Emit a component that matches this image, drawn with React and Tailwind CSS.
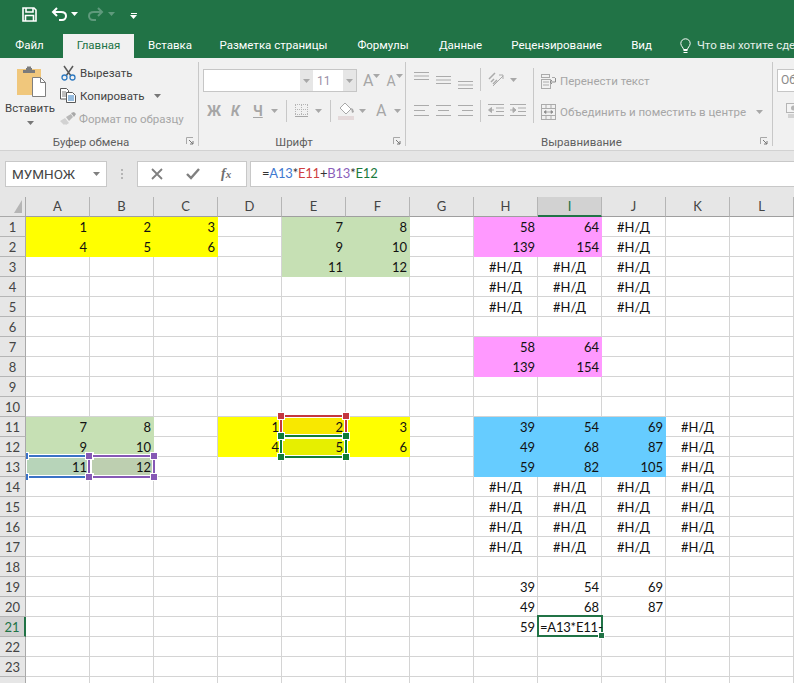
const COLS = ['A', 'B', 'C', 'D', 'E', 'F', 'G', 'H', 'I', 'J', 'K', 'L'];
const ROWS = Array.from({ length: 24 }, (_, i) => i + 1);
const NA = '#Н/Д';

const values = {
  A1: 1, B1: 2, C1: 3, E1: 7, F1: 8, H1: 58, I1: 64, J1: NA,
  A2: 4, B2: 5, C2: 6, E2: 9, F2: 10, H2: 139, I2: 154, J2: NA,
  E3: 11, F3: 12, H3: NA, I3: NA, J3: NA,
  H4: NA, I4: NA, J4: NA,
  H5: NA, I5: NA, J5: NA,
  H7: 58, I7: 64,
  H8: 139, I8: 154,
  A11: 7, B11: 8, D11: 1, E11: 2, F11: 3, H11: 39, I11: 54, J11: 69, K11: NA,
  A12: 9, B12: 10, D12: 4, E12: 5, F12: 6, H12: 49, I12: 68, J12: 87, K12: NA,
  A13: 11, B13: 12, H13: 59, I13: 82, J13: 105, K13: NA,
  H14: NA, I14: NA, J14: NA, K14: NA,
  H15: NA, I15: NA, J15: NA, K15: NA,
  H16: NA, I16: NA, J16: NA, K16: NA,
  H17: NA, I17: NA, J17: NA, K17: NA,
  H19: 39, I19: 54, J19: 69,
  H20: 49, I20: 68, J20: 87,
  H21: 59,
};

const YELLOW = 'bg-[#ffff00] border-[#ffff00]';
const GREEN = 'bg-[#c6e0b4] border-[#c6e0b4]';
const PINK = 'bg-[#ff99ff] border-[#ff99ff]';
const BLUE = 'bg-[#66ccff] border-[#66ccff]';

const inRange = (col, row, from, to, r1, r2) => col >= from && col <= to && row >= r1 && row <= r2;

const fillFor = (col, row) => {
  const id = col + row;
  if (id === 'A13') return 'bg-[#b7d4b9] border-[#b7d4b9]';
  if (id === 'B13') return 'bg-[#bdcfb0] border-[#bdcfb0]';
  if (id === 'E11') return 'bg-[#f8e800] border-[#f8e800]';
  if (id === 'E12') return 'bg-[#e6ef00] border-[#e6ef00]';
  if (inRange(col, row, 'A', 'C', 1, 2) || inRange(col, row, 'D', 'F', 11, 12)) return YELLOW;
  if (inRange(col, row, 'E', 'F', 1, 3) || inRange(col, row, 'A', 'B', 11, 13)) return GREEN;
  if (inRange(col, row, 'H', 'I', 1, 2) || inRange(col, row, 'H', 'I', 7, 8)) return PINK;
  if (inRange(col, row, 'H', 'J', 11, 13)) return BLUE;
  return 'border-[#d4d4d4]';
};

const REFS = {
  A13: { line: 'border-[#3a72c6]', dot: 'bg-[#3a72c6]' },
  B13: { line: 'border-[#8659b5]', dot: 'bg-[#8659b5]' },
  E11: { line: 'border-[#c4373f]', dot: 'bg-[#c4373f]' },
  E12: { line: 'border-[#0f7d36]', dot: 'bg-[#0f7d36]' },
};

function RefBox({ line, dot }) {
  const handle = `absolute w-[6px] h-[6px] outline outline-1 outline-white ${dot}`;
  return (
    <div className={`absolute z-10 left-[-2px] top-[-2px] w-[67px] h-[23px] border-2 shadow-[inset_0_0_0_1px_#ffffff,0_0_0_1px_#ffffff] ${line}`}>
      <div className={`${handle} left-[-4px] top-[-4px]`} />
      <div className={`${handle} right-[-4px] top-[-4px]`} />
      <div className={`${handle} left-[-4px] bottom-[-4px]`} />
      <div className={`${handle} right-[-4px] bottom-[-4px]`} />
    </div>
  );
}

function Caret({ className = '', color = '#a8a8a8' }) {
  return (
    <svg width="7" height="4" viewBox="0 0 7 4" className={`shrink-0 ${className}`}>
      <path d="M0 0h7L3.500 4z" fill={color} />
    </svg>
  );
}

function Launcher() {
  return (
    <svg width="8" height="8" viewBox="0 0 8 8" className="absolute right-[4px] top-[5px]">
      <path d="M.5 7V.5H7" fill="none" stroke="#a8a8a8" />
      <path d="M3 3l4 4M7 4v3H4" fill="none" stroke="#777777" />
    </svg>
  );
}

// horizontal rows for the alignment buttons
function Lines({ rows, width = 15, gap = 3.5 }) {
  const h = Math.ceil(rows.length * gap);
  return (
    <svg width={width} height={h} viewBox={`0 0 ${width} ${h}`} className="shrink-0">
      {rows.map(([x1, x2], i) => (
        <rect key={i} x={x1} y={i * gap} width={x2 - x1} height="1" fill="#ababab" />
      ))}
    </svg>
  );
}

function SaveIcon() {
  return (
    <svg width="15" height="15" viewBox="0 0 15 15">
      <path d="M1 1h11l2 2v11H1z" fill="none" stroke="#ffffff" strokeWidth="1.6" />
      <path d="M4 1v4h7V1M3.500 14V8.500h8V14" fill="none" stroke="#ffffff" strokeWidth="1.6" />
    </svg>
  );
}

function UndoIcon({ color }) {
  return (
    <svg width="16" height="14" viewBox="0 0 16 14">
      <path d="M6 1L2 5l4 4" fill="none" stroke={color} strokeWidth="2" />
      <path d="M2.500 5H10c3.500 0 5 2 5 4s-1.500 4-4 4H8" fill="none" stroke={color} strokeWidth="2" />
    </svg>
  );
}

function RedoIcon({ color }) {
  return (
    <svg width="16" height="14" viewBox="0 0 16 14">
      <path d="M10 1l4 4-4 4" fill="none" stroke={color} strokeWidth="2" />
      <path d="M13.500 5H6C2.500 5 1 7 1 9s1.500 4 4 4h3" fill="none" stroke={color} strokeWidth="2" />
    </svg>
  );
}

function PasteIcon() {
  return (
    <svg width="30" height="32" viewBox="0 0 30 32">
      <rect x="0" y="4" width="24" height="26" fill="#f0c77c" />
      <path d="M6 5h12v3H6z" fill="#7b7b7b" />
      <path d="M9 3h6v2H9z" fill="#7b7b7b" />
      <path d="M10 1.500h4V3h-4z" fill="#7b7b7b" />
      <path d="M15.500 12.500h8l5 5v14h-13z" fill="#ffffff" stroke="#7f7f7f" />
      <path d="M23.500 12.500v5h5" fill="none" stroke="#7f7f7f" />
    </svg>
  );
}

function ScissorsIcon() {
  return (
    <svg width="15" height="16" viewBox="0 0 15 16">
      <path d="M3 1l7 10M12 1L5 11" stroke="#595959" strokeWidth="1.5" fill="none" />
      <circle cx="3.500" cy="12.500" r="2.500" fill="none" stroke="#2f7ac0" strokeWidth="1.300" />
      <circle cx="11.500" cy="12.500" r="2.500" fill="none" stroke="#2f7ac0" strokeWidth="1.300" />
    </svg>
  );
}

function CopyIcon() {
  return (
    <svg width="16" height="15" viewBox="0 0 16 15">
      <path d="M.5.500h6l2 2V11H.5z" fill="#ffffff" stroke="#595959" />
      <path d="M2 4h4M2 6h4M2 8h4" stroke="#7f7f7f" />
      <path d="M6.500 4.500h6l3 3v7h-9z" fill="#ffffff" stroke="#595959" />
      <path d="M8 8h6M8 10h6M8 12h6" stroke="#2f7ac0" />
    </svg>
  );
}

function BrushIcon() {
  return (
    <svg width="16" height="14" viewBox="0 0 16 14">
      <path d="M0 9l5-3 4 5-3 2-1-1-1 1z" fill="#d2d2d2" />
      <path d="M6 5l5-3 2 3-4 4z" fill="#b8b8b8" />
      <path d="M11 1l3-1 2 2-2 3z" fill="#a8a8a8" />
    </svg>
  );
}

function BordersIcon() {
  return (
    <svg width="13" height="15" viewBox="0 0 13 15">
      <path d="M.5 1v10M6.500 1v10M12.500 1v10M0 .5h13M0 5.500h13M0 10.500h13" stroke="#b5b5b5" strokeDasharray="1 1" fill="none" />
      <rect x="0" y="12" width="13" height="1" fill="#a8a8a8" />
    </svg>
  );
}

function FillIcon() {
  return (
    <svg width="17" height="18" viewBox="0 0 17 18">
      <path d="M7 1l6 6-5 5-6-6z" fill="#ffffff" stroke="#a8a8a8" />
      <path d="M13 6l2 1 1 3-2 1z" fill="#a8a8a8" />
      <rect x="0" y="14" width="16" height="4" fill="#e4d9da" />
    </svg>
  );
}

function OrientIcon() {
  return (
    <svg width="16" height="16" viewBox="0 0 16 16">
      <path d="M1 8l6-6M3 11l3-3M5 13l4-4" stroke="#ababab" strokeWidth="1.500" fill="none" />
      <path d="M5 15L15 5M11 4l4 0 0 4" stroke="#ababab" fill="none" />
    </svg>
  );
}

function IndentIcon({ flip }) {
  return (
    <svg width="16" height="12" viewBox="0 0 16 12">
      <path d="M0 .5h16M8 4h8M8 7.500h8M0 11.500h16" stroke="#ababab" />
      <path d={flip ? 'M0 6h5M3 3.500L6 6 3 8.500z' : 'M6 6H1M3.500 3.500L.5 6l3 2.500z'} stroke="#ababab" fill="#ababab" />
    </svg>
  );
}

function WrapIcon() {
  return (
    <svg width="15" height="15" viewBox="0 0 15 15">
      <rect x=".5" y=".5" width="8" height="3" fill="none" stroke="#ababab" />
      <path d="M11 3.500h3M2 8h6M2 11h6" stroke="#ababab" fill="none" />
      <rect x=".5" y="5.500" width="9" height="9" fill="none" stroke="#ababab" />
      <path d="M14.500 4v4H9M11 6L9 8l2 2" stroke="#8d8d8d" fill="none" />
    </svg>
  );
}

function MergeIcon() {
  return (
    <svg width="15" height="16" viewBox="0 0 15 16">
      <rect x=".5" y=".5" width="14" height="15" fill="none" stroke="#ababab" />
      <path d="M0 4.500h15M0 11.500h15M5 .5v4M10 .5v4M5 11.500v4M10 11.500v4" stroke="#ababab" />
      <path d="M3 8h9M3 8l2-1.500v3zM12 8l-2-1.500v3z" stroke="#8d8d8d" fill="#8d8d8d" strokeWidth=".7" />
    </svg>
  );
}

function BulbIcon() {
  return (
    <svg width="11" height="17" viewBox="0 0 11 17">
      <path d="M3.500 11.500C3.500 9.500 1 8.500.8 5.500.8 2.800 3 .8 5.500.8s4.700 2 4.700 4.700c-.2 3-2.700 4-2.700 6z" fill="none" stroke="#ffffff" />
      <path d="M3.500 12.500h4M3.500 14.500h4" stroke="#ffffff" />
    </svg>
  );
}

function Tab({ width, active, children }) {
  return (
    <div
      className={`${width} shrink-0 h-full flex items-center justify-center text-[11.5px] ${
        active ? 'bg-[#f1f1f1] text-[#217346]' : 'text-white'
      }`}
    >
      {children}
    </div>
  );
}

function GroupLabel({ children, className = 'justify-center pr-[16px]' }) {
  return (
    <div className={`relative h-[18px] pt-[3px] flex items-center text-[11.5px] text-[#5f5f5f] ${className}`}>
      {children}
      <Launcher />
    </div>
  );
}

function Separator() {
  return <div className="w-px h-[84px] mt-[4px] bg-[#c8c8c8] shrink-0" />;
}

function Ribbon() {
  return (
    <div className="h-[93px] shrink-0 flex bg-[#f1f1f1] border-b border-[#d2d2d2] overflow-hidden whitespace-nowrap font-['Roboto',sans-serif]">
      {/* clipboard */}
      <div className="w-[198px] shrink-0 flex flex-col">
        <div className="h-[75px] flex">
          <div className="w-[60px] shrink-0 flex flex-col items-center pt-[7px]">
            <div className="ml-[4px]"><PasteIcon /></div>
            <div className="text-[11.5px] text-[#444444] mt-[1px] leading-[20px]">Вставить</div>
            <Caret className="mt-[3px]" color="#777777" />
          </div>
          <div className="pt-[3px] text-[11.5px] text-[#444444]">
            <div className="h-[23px] flex items-center gap-[4px] ml-[1px]">
              <ScissorsIcon />
              <span className="pt-[2px]">Вырезать</span>
            </div>
            <div className="h-[23px] flex items-center gap-[4px]">
              <CopyIcon />
              <span className="pt-[2px]">Копировать</span>
              <Caret className="ml-[5px]" color="#777777" />
            </div>
            <div className="h-[23px] flex items-center gap-[3px] text-[#a6a6a6]">
              <BrushIcon />
              <span className="pt-[2px]">Формат по образцу</span>
            </div>
          </div>
        </div>
        <GroupLabel>Буфер обмена</GroupLabel>
      </div>
      <Separator />

      {/* font */}
      <div className="w-[206px] shrink-0 flex flex-col">
        <div className="h-[75px] pt-[11px]">
          <div className="flex items-center pl-[4px]">
            <div className="w-[154px] h-[23px] flex bg-white border border-[#c6c6c6]">
              <div className="w-[96px]" />
              <div className="w-[13px] bg-[#e6e6e6] flex items-center justify-center"><Caret /></div>
              <div className="w-[2px]" />
              <div className="w-[28px] flex items-center pl-[2px] text-[12px] text-[#9a8fa6]">11</div>
              <div className="flex-1 bg-[#e6e6e6] flex items-center justify-center"><Caret /></div>
            </div>
            <span className="ml-[6px] text-[16px] leading-none text-[#a6a6a6]">A</span>
            <Caret className="mb-[10px]" />
            <span className="ml-[6px] text-[14px] leading-none text-[#a6a6a6]">A</span>
            <Caret className="mb-[10px]" />
          </div>
          <div className="flex items-center h-[22px] mt-[8px] pl-[8px] text-[#a6a6a6]">
            <span className="w-[13px] text-[14px] font-bold leading-none">Ж</span>
            <span className="w-[7px] ml-[11px] text-[14px] font-bold italic leading-none">К</span>
            <span className="w-[10px] ml-[15px] text-[14px] font-bold underline leading-none">Ч</span>
            <Caret className="ml-[8px]" />
            <div className="w-px h-[22px] ml-[8px] bg-[#c8c8c8]" />
            <div className="ml-[8px] flex"><BordersIcon /></div>
            <Caret className="ml-[7px]" />
            <div className="w-px h-[22px] ml-[8px] bg-[#c8c8c8]" />
            <div className="ml-[7px] flex"><FillIcon /></div>
            <Caret className="ml-[4px]" />
            <span className="ml-[10px] w-[11px] text-[16px] leading-none">A</span>
            <Caret className="ml-[7px]" />
          </div>
        </div>
        <GroupLabel>Шрифт</GroupLabel>
      </div>
      <Separator />

      {/* alignment */}
      <div className="w-[366px] shrink-0 flex flex-col">
        <div className="h-[75px] flex pl-[8px] pt-[10px]">
          <div className="w-[119px] shrink-0">
            <div className="h-[24px] flex">
              <div className="flex gap-[7px] w-[66px]">
                <div className="mt-[4px]"><Lines rows={[[0, 15], [0, 15], [0, 15]]} /></div>
                <div className="mt-[8px]"><Lines rows={[[0, 15], [0, 15], [0, 15]]} /></div>
                <div className="mt-[13px]"><Lines rows={[[0, 15], [0, 15], [0, 15]]} /></div>
              </div>
              <div className="w-px h-[23px] bg-[#c8c8c8]" />
              <div className="ml-[7px] mt-[3px] flex"><OrientIcon /></div>
              <Caret className="ml-[6px] mt-[10px]" />
            </div>
            <div className="h-[23px] mt-[8px] flex">
              <div className="flex gap-[7px] w-[66px] pt-[5px]">
                <Lines rows={[[0, 15], [0, 11], [0, 15]]} gap={5} />
                <Lines rows={[[0, 15], [2, 13], [0, 15]]} gap={5} />
                <Lines rows={[[0, 15], [4, 15], [0, 15]]} gap={5} />
              </div>
              <div className="w-px h-[22px] bg-[#c8c8c8]" />
              <div className="ml-[7px] mt-[4px] flex gap-[6px]">
                <IndentIcon />
                <IndentIcon flip />
              </div>
            </div>
          </div>
          <div className="w-px h-[55px] bg-[#c8c8c8] shrink-0" />
          <div className="ml-[7px] flex-1 text-[11.5px] text-[#a6a6a6]">
            <div className="h-[24px] flex items-center gap-[4px] mt-[1px]">
              <WrapIcon />
              <span className="pt-[2px]">Перенести текст</span>
            </div>
            <div className="h-[24px] mt-[7px] flex items-center gap-[4px]">
              <MergeIcon />
              <span className="pt-[2px]">Объединить и поместить в центре</span>
              <Caret className="ml-[6px]" />
            </div>
          </div>
        </div>
        <GroupLabel className="pl-[135px]">Выравнивание</GroupLabel>
      </div>
      <Separator />

      {/* number, cut off by the window */}
      <div className="pl-[4px] pt-[11px] w-[60px] shrink-0">
        <div className="w-[60px] h-[23px] bg-white border border-[#c6c6c6] pl-[3px] text-[12px] leading-[21px] text-[#8a8a8a]">Об</div>
        <svg width="15" height="16" viewBox="0 0 15 16" className="ml-[9px] mt-[11px]">
          <rect x=".5" y=".5" width="14" height="9" fill="#f4f4f4" stroke="#b5b5b5" />
          <circle cx="7.500" cy="5" r="2.500" fill="#b5b5b5" />
          <path d="M2 12h12M2 14h12" stroke="#c8c8c8" strokeWidth="1.500" />
        </svg>
      </div>
    </div>
  );
}

function FormulaBar() {
  return (
    <div className="h-[46px] shrink-0 bg-[#e6e6e6] pt-[10px] flex items-start font-['Roboto',sans-serif]">
      <div className="ml-[5px] w-[102px] h-[26px] bg-white border border-[#c8c8c8] flex items-center pl-[6px] text-[13.5px] text-[#444444]">
        <span className="flex-1">МУМНОЖ</span>
        <Caret className="mr-[6px]" color="#7f7f7f" />
      </div>
      <div className="w-[30px] h-[26px] flex flex-col items-center justify-center gap-[2px]">
        <div className="w-[2px] h-[2px] bg-[#b5b5b5]" />
        <div className="w-[2px] h-[2px] bg-[#b5b5b5]" />
        <div className="w-[2px] h-[2px] bg-[#b5b5b5]" />
      </div>
      <div className="w-[110px] h-[26px] bg-white border border-[#c8c8c8] flex items-center pl-[13px]">
        <svg width="12" height="12" viewBox="0 0 12 12">
          <path d="M1 1l10 10M11 1L1 11" stroke="#7f7f7f" strokeWidth="1.800" fill="none" />
        </svg>
        <svg width="14" height="12" viewBox="0 0 14 12" className="ml-[23px]">
          <path d="M1 6l4 4 8-9" stroke="#7f7f7f" strokeWidth="2.400" fill="none" />
        </svg>
        <span className="ml-[21px] font-['Liberation_Serif',serif] italic font-bold text-[14px] leading-none text-[#6f6f6f]">
          f<span className="text-[11px]">x</span>
        </span>
      </div>
      <div className="ml-[3px] flex-1 h-[26px] bg-white border border-r-0 border-[#c8c8c8] pl-[11px] flex items-center font-['Lato',sans-serif] text-[13px] tracking-[-0.2px] text-[#333333]">
        =<span className="text-[#3f79d0]">A13</span>*<span className="text-[#d0403f]">E11</span>+
        <span className="text-[#8c5fbb]">B13</span>*<span className="text-[#1b7a3c]">E12</span>
      </div>
    </div>
  );
}

function Cell({ col, row }) {
  const id = col + row;
  const value = values[id];
  const ref = REFS[id];
  const isText = value === NA;
  return (
    <div
      className={`relative border-r border-b overflow-visible leading-[20px] whitespace-nowrap ${fillFor(col, row)} ${
        isText ? 'text-center' : 'text-right pr-[2px]'
      }`}
    >
      {value}
      {ref && <RefBox line={ref.line} dot={ref.dot} />}
      {id === 'I21' && (
        <div className="absolute z-10 left-[-1px] top-[-2px] w-[66px] h-[22px] border-2 border-[#217346] text-left pl-[1px] leading-[20px] bg-white tracking-[-0.2px]">
          =A13*E11-
          <div className="absolute right-[-3px] bottom-[-3px] w-[5px] h-[5px] bg-[#217346] outline outline-1 outline-white" />
        </div>
      )}
    </div>
  );
}

function Sheet() {
  return (
    <div className="flex-1 overflow-hidden bg-white font-['Lato',sans-serif] text-[13px] text-[#111111]">
      <div className="grid grid-cols-[26px_repeat(12,64px)] grid-rows-[20px] auto-rows-[20px]">
        <div className="relative z-20 bg-[#e6e6e6] border-r border-b border-[#a9a9a9] flex items-end justify-end p-[3px]">
          <svg width="8" height="13" viewBox="0 0 8 13"><path d="M8 0v13H0z" fill="#b5b5b5" /></svg>
        </div>
        {COLS.map((c) => (
          <div
            key={c}
            className={`text-center leading-[19px] border-r border-b border-r-[#b5b5b5] border-b-[#9f9f9f] ${
              c === 'I' ? 'bg-[#d2d2d2] text-[#217346] border-b-2 border-b-[#217346]' : 'bg-[#e6e6e6] text-[#444444]'
            }`}
          >
            {c}
          </div>
        ))}
        {ROWS.map((r) => [
          <div
            key={`h${r}`}
            className={`relative z-20 text-center leading-[20px] border-b border-b-[#b5b5b5] ${
              r === 21
                ? 'bg-[#d2d2d2] text-[#217346] border-r-2 border-r-[#217346]'
                : 'bg-[#e6e6e6] text-[#444444] border-r border-r-[#a9a9a9]'
            }`}
          >
            {r < 24 ? r : ''}
          </div>,
          ...COLS.map((c) => <Cell key={c + r} col={c} row={r} />),
        ])}
      </div>
    </div>
  );
}

export default function App() {
  return (
    <div className="w-[794px] h-[683px] overflow-hidden flex flex-col bg-white">
      <div className="h-[34px] shrink-0 bg-[#217346] flex items-start">
        <div className="ml-[22px] mt-[7px] flex"><SaveIcon /></div>
        <div className="ml-[14px] mt-[7px] flex"><UndoIcon color="#ffffff" /></div>
        <Caret className="ml-[4px] mt-[12px]" color="#ffffff" />
        <div className="ml-[10px] mt-[7px] flex"><RedoIcon color="#5f9a7c" /></div>
        <Caret className="ml-[4px] mt-[12px]" color="#5f9a7c" />
        <div className="ml-[15px] mt-[13px] flex flex-col items-center gap-[1px]">
          <div className="w-[6px] h-px bg-white" />
          <Caret color="#ffffff" />
        </div>
      </div>
      <div className="h-[24px] shrink-0 bg-[#217346] flex items-center font-['Roboto',sans-serif] whitespace-nowrap overflow-hidden">
        <Tab width="w-[59px]">Файл</Tab>
        <div className="w-[4px] shrink-0" />
        <Tab width="w-[71px]" active>Главная</Tab>
        <Tab width="w-[72px]">Вставка</Tab>
        <Tab width="w-[135px]">Разметка страницы</Tab>
        <Tab width="w-[84px]">Формулы</Tab>
        <Tab width="w-[71px]">Данные</Tab>
        <Tab width="w-[121px]">Рецензирование</Tab>
        <Tab width="w-[49px]">Вид</Tab>
        <div className="ml-[14px] shrink-0 flex items-center gap-[6px] text-[11.5px] text-[#e4efe9]">
          <BulbIcon />
          <span>Что вы хотите сделать?</span>
        </div>
      </div>
      <Ribbon />
      <FormulaBar />
      <Sheet />
    </div>
  );
}
